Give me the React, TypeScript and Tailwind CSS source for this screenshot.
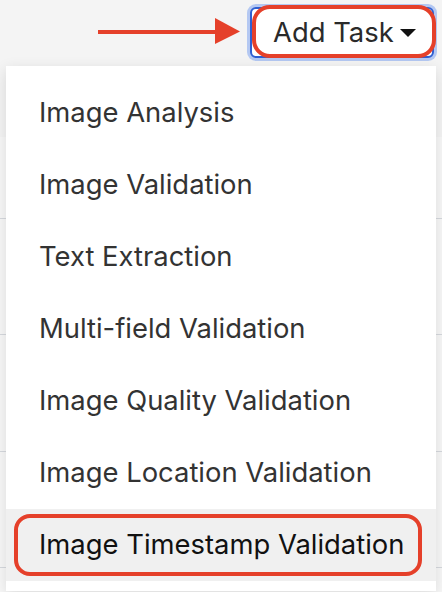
const tasks = [
  "Image Analysis",
  "Image Validation",
  "Text Extraction",
  "Multi-field Validation",
  "Image Quality Validation",
  "Image Location Validation",
  "Image Timestamp Validation",
];

const App = () => {
  return (
    <div
      className="relative w-[442px] h-[592px] overflow-hidden bg-[#f8f8f8]"
      style={{ fontFamily: "Inter, 'Liberation Sans', sans-serif" }}
    >
      {/* header */}
      <div className="h-[137px] bg-[#f4f4f4] flex justify-end items-start pr-[8px] pt-[7px]">
        <div className="relative">
          <button className="w-[184px] h-[51px] rounded-[6px] border-2 border-[#2f5fd1] bg-white ring-[3px] ring-[#b4c8f2] flex items-center pl-[21px] gap-[6px] text-[27.4px] text-[#2a2a2a]">
            Add Task
            <svg width="16" height="9" viewBox="0 0 16 9" className="mt-[1px]">
              <path d="M0 0 H16 L8 8 Z" fill="#111" />
            </svg>
          </button>
          <div className="absolute left-[2px] top-[-2px] w-[184px] h-[53px] rounded-[18px] border-[4px] border-[#e5402a]" />
        </div>
      </div>

      {/* table rows behind */}
      <div className="flex flex-col">
        <div className="h-[82px] border-b border-[#d6d9de]" />
        <div className="h-[116px] border-b border-[#d6d9de]" />
        <div className="h-[117px] border-b border-[#d6d9de]" />
        <div className="h-[116px] border-b border-[#d6d9de]" />
      </div>

      {/* arrow */}
      <svg
        className="absolute left-[96px] top-[17px]"
        width="146"
        height="28"
        viewBox="0 0 146 28"
      >
        <line x1="2" y1="15" x2="122" y2="15" stroke="#e5402a" strokeWidth="4" />
        <path d="M119 1 L144 14.5 L119 27 Z" fill="#e5402a" />
      </svg>

      {/* dropdown menu */}
      <div className="absolute left-[6px] top-[66px] w-[430px] bg-white pt-[11px] pb-[10px] shadow-[0_4px_14px_rgba(0,0,0,0.12)]">
        {tasks.map((t, i) => {
          const last = i === tasks.length - 1;
          return (
            <div
              key={t}
              className={
                last
                  ? "relative h-[72px] flex items-center pl-[33px] text-[27.4px] text-[#111] bg-[#f0f0f0]"
                  : "h-[72px] flex items-center pl-[33px] text-[27.4px] text-[#333]"
              }
            >
              {t}
              {last && (
                <div className="absolute left-[8px] top-[5px] w-[408px] h-[62px] rounded-[16px] border-[4px] border-[#e5402a]" />
              )}
            </div>
          );
        })}
      </div>
    </div>
  );
};

export default App;
